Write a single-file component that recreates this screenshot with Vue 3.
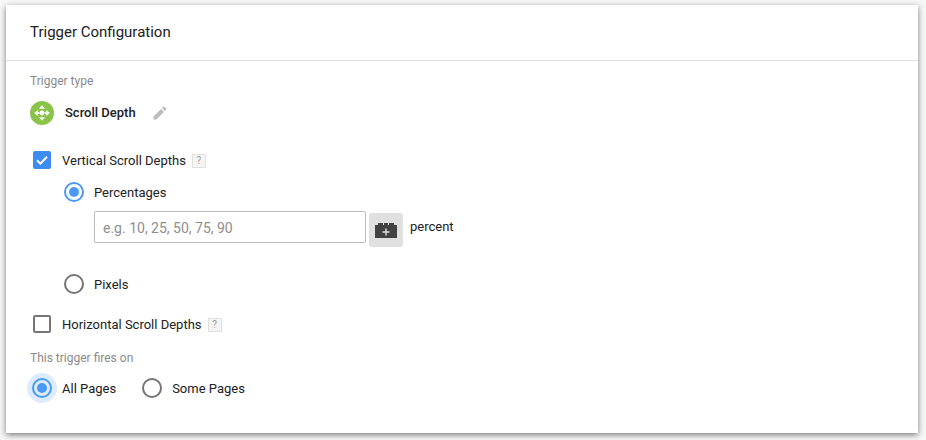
<script setup>
const help = '?'
</script>

<template>
  <div class="page">
    <div class="card">
      <header class="head">Trigger Configuration</header>
      <main class="body">
        <div class="label type-label">Trigger type</div>
        <div class="type-row">
          <span class="type-icon">
            <svg width="24" height="24" viewBox="0 0 24 24">
              <circle cx="12" cy="12" r="12" fill="#8bc34a" />
              <g fill="#fff">
                <path d="M12 4.2 8.9 7.8h6.2zM12 19.8l-3.1-3.6h6.2zM4.2 12l3.6-3.1v6.2zM19.8 12l-3.6-3.1v6.2z" />
                <circle cx="12" cy="12" r="2.4" />
                <circle cx="8.6" cy="12" r="1" />
                <circle cx="15.4" cy="12" r="1" />
              </g>
            </svg>
          </span>
          <span class="type-name">Scroll Depth</span>
          <svg class="pencil" width="14" height="14" viewBox="0 0 14 14">
            <path fill="#bdbdbd" d="M0.5 10.6V13.5H3.4L11 5.9 8.1 3zM13.3 3.6a.8.8 0 0 0 0-1.1L11.5.7a.8.8 0 0 0-1.1 0L9 2.1 11.9 5z" />
          </svg>
        </div>

        <div class="check-row first">
          <span class="check on">
            <svg width="18" height="18" viewBox="0 0 18 18">
              <path d="M4 9.2 7.4 12.6 14 5.8" fill="none" stroke="#fff" stroke-width="2" />
            </svg>
          </span>
          <span class="text">Vertical Scroll Depths</span>
          <span class="help">{{ help }}</span>
        </div>

        <div class="nested">
          <div class="radio-row">
            <span class="radio on"></span>
            <span class="text">Percentages</span>
          </div>
          <div class="input-row">
            <div class="input">e.g. 10, 25, 50, 75, 90</div>
            <button class="var-btn" type="button">
              <svg width="22" height="15" viewBox="0 0 22 15">
                <path fill="#424242" d="M1 2H3V0H8V2H9V0H13V2H14V0H19V2H22V15H0V2z" />
                <path stroke="#e0e0e0" stroke-width="1.4" d="M11 5.5v7M7.5 9h7" />
              </svg>
            </button>
            <span class="text unit">percent</span>
          </div>
          <div class="radio-row pixels">
            <span class="radio"></span>
            <span class="text">Pixels</span>
          </div>
        </div>

        <div class="check-row second">
          <span class="check"></span>
          <span class="text">Horizontal Scroll Depths</span>
          <span class="help">{{ help }}</span>
        </div>

        <div class="label fires-label">This trigger fires on</div>
        <div class="fires-row">
          <div class="fire-opt">
            <span class="halo"><span class="radio on"></span></span>
            <span class="text">All Pages</span>
          </div>
          <div class="fire-opt">
            <span class="radio"></span>
            <span class="text">Some Pages</span>
          </div>
        </div>
      </main>
    </div>
  </div>
</template>

<style>
html, body {
  margin: 0;
  background: #f7f7f7;
}
</style>

<style scoped>
.page {
  box-sizing: border-box;
  height: 440px;
  padding: 5px 8px 7px 6px;
}
.card {
  box-sizing: border-box;
  height: 428px;
  background: #fff;
  box-shadow: 0 2px 6px rgba(0, 0, 0, 0.5);
  font-family: Roboto, "Liberation Sans", sans-serif;
  color: #212121;
}
.head {
  box-sizing: border-box;
  height: 56px;
  padding: 17px 24px 0;
  border-bottom: 1px solid #e0e0e0;
  font-size: 15px;
  line-height: 20px;
}
.body {
  padding: 0 24px;
}
.label {
  font-size: 12px;
  line-height: 16px;
  color: #8a8a8a;
}
.type-label {
  padding-top: 12px;
}
.type-row {
  display: flex;
  align-items: center;
  height: 24px;
  margin-top: 12px;
}
.type-icon {
  display: flex;
  width: 24px;
  height: 24px;
}
.type-name {
  margin: 0 0 2px 11px;
  font-size: 13px;
  font-weight: 500;
}
.pencil {
  margin-left: 17px;
}
.text {
  padding-top: 2px;
  font-size: 13px;
  line-height: 18px;
}
.check-row {
  display: flex;
  align-items: center;
  height: 18px;
  padding-left: 3px;
}
.check-row.first {
  margin-top: 26px;
}
.check-row.second {
  margin-top: 21px;
}
.check {
  box-sizing: border-box;
  width: 18px;
  height: 18px;
  border: 2px solid #757575;
  border-radius: 2px;
  margin-right: 11px;
}
.check.on {
  border: 0;
  background: #3f8cf0;
}
.check svg {
  display: block;
}
.help {
  box-sizing: border-box;
  width: 14px;
  height: 14px;
  margin: 2px 0 0 6px;
  border: 1px solid #e0e0e0;
  background: #f5f5f5;
  color: #9e9e9e;
  font-size: 10px;
  line-height: 12px;
  text-align: center;
}
.nested {
  padding-left: 34px;
}
.radio-row {
  display: flex;
  align-items: center;
  height: 20px;
  margin-top: 13px;
}
.radio-row .radio {
  margin-right: 10px;
}
.radio {
  box-sizing: border-box;
  position: relative;
  flex: none;
  width: 20px;
  height: 20px;
  border: 2px solid #757575;
  border-radius: 50%;
}
.radio.on {
  border-color: #4a9af5;
}
.radio.on::after {
  content: "";
  position: absolute;
  inset: 3px;
  border-radius: 50%;
  background: #4a9af5;
}
.input-row {
  display: flex;
  align-items: flex-start;
  margin: 9px 0 0 30px;
}
.input {
  box-sizing: border-box;
  width: 272px;
  height: 32px;
  padding: 1px 8px 0;
  border: 1px solid #bdbdbd;
  border-radius: 2px;
  font-size: 14px;
  line-height: 30px;
  color: #8e8e8e;
}
.var-btn {
  display: flex;
  align-items: center;
  justify-content: center;
  width: 34px;
  height: 34px;
  margin: 2px 0 0 3px;
  padding: 1px 0 0;
  border: 0;
  border-radius: 3px;
  background: #e0e0e0;
}
.unit {
  margin: 5px 0 0 7px;
}
.pixels {
  margin-top: 27px;
}
.fires-label {
  margin-top: 17px;
}
.fires-row {
  display: flex;
  align-items: center;
  margin-top: 7px;
  padding-left: 2px;
}
.fire-opt {
  display: flex;
  align-items: center;
  height: 30px;
  gap: 10px;
  margin-right: 26px;
}
.halo {
  display: flex;
  align-items: center;
  justify-content: center;
  width: 30px;
  height: 30px;
  margin: 0 -5px 0 -5px;
  border-radius: 50%;
  background: #dcebfd;
}
</style>
